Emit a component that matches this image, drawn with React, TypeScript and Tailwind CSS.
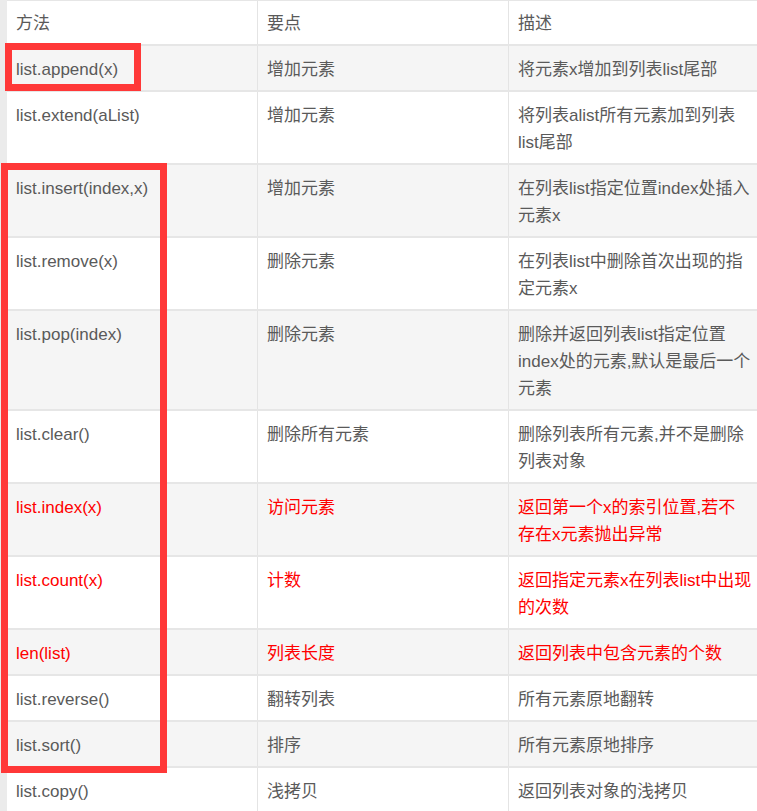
type Row = { method: string; point: string; desc: string[]; red?: boolean };

const ROWS: Row[] = [
  { method: "list.append(x)", point: "增加元素", desc: ["将元素x增加到列表list尾部"] },
  { method: "list.extend(aList)", point: "增加元素", desc: ["将列表alist所有元素加到列表", "list尾部"] },
  { method: "list.insert(index,x)", point: "增加元素", desc: ["在列表list指定位置index处插入", "元素x"] },
  { method: "list.remove(x)", point: "删除元素", desc: ["在列表list中删除首次出现的指", "定元素x"] },
  {
    method: "list.pop(index)",
    point: "删除元素",
    desc: ["删除并返回列表list指定位置", "index处的元素,默认是最后一个", "元素"],
  },
  { method: "list.clear()", point: "删除所有元素", desc: ["删除列表所有元素,并不是删除", "列表对象"] },
  { method: "list.index(x)", point: "访问元素", desc: ["返回第一个x的索引位置,若不", "存在x元素抛出异常"], red: true },
  { method: "list.count(x)", point: "计数", desc: ["返回指定元素x在列表list中出现", "的次数"], red: true },
  { method: "len(list)", point: "列表长度", desc: ["返回列表中包含元素的个数"], red: true },
  { method: "list.reverse()", point: "翻转列表", desc: ["所有元素原地翻转"] },
  { method: "list.sort()", point: "排序", desc: ["所有元素原地排序"] },
  { method: "list.copy()", point: "浅拷贝", desc: ["返回列表对象的浅拷贝"] },
];

const cell = "pl-[9px] pt-[10px] pb-[7px] whitespace-nowrap";

export default function App() {
  return (
    <div
      className="relative w-[757px] h-[811px] overflow-hidden bg-[#ebebeb] text-[17px] leading-[27px] text-[#5a5a5a]"
      style={{ fontFamily: '"Liberation Sans", "Noto Sans CJK SC", sans-serif' }}
    >
      <div className="ml-[7px] w-[770px] bg-white border-t border-[#e6e6e6]">
        <div className="grid grid-cols-[250px_251px_269px] border-b-2 border-[#e6e6e6] bg-white">
          <div className="pl-[9px] pt-[9px] pb-[7px]">方法</div>
          <div className="pl-[9px] pt-[9px] pb-[7px] border-l border-[#e4e4e4]">要点</div>
          <div className="pl-[9px] pt-[9px] pb-[7px] border-l border-[#e4e4e4]">描述</div>
        </div>
        {ROWS.map((r, i) => (
          <div
            key={r.method}
            className={`grid grid-cols-[250px_251px_269px] border-b-2 border-[#e6e6e6] ${
              i % 2 === 0 ? "bg-[#f5f5f5]" : "bg-white"
            } ${r.red ? "text-[#ff0000]" : ""}`}
          >
            <div className={cell}>{r.method}</div>
            <div className={`${cell} border-l border-[#e4e4e4]`}>{r.point}</div>
            <div className={`${cell} border-l border-[#e4e4e4]`}>
              {r.desc.map((line) => (
                <div key={line}>{line}</div>
              ))}
            </div>
          </div>
        ))}
      </div>

      {/* red annotation boxes drawn over the table */}
      <div className="absolute left-[5px] top-[43px] w-[136px] h-[48px] border-[7px] border-[#ff3838]" />
      <div className="absolute left-[1px] top-[163px] w-[166px] h-[610px] border-[7px] border-[#ff3838]" />
    </div>
  );
}
